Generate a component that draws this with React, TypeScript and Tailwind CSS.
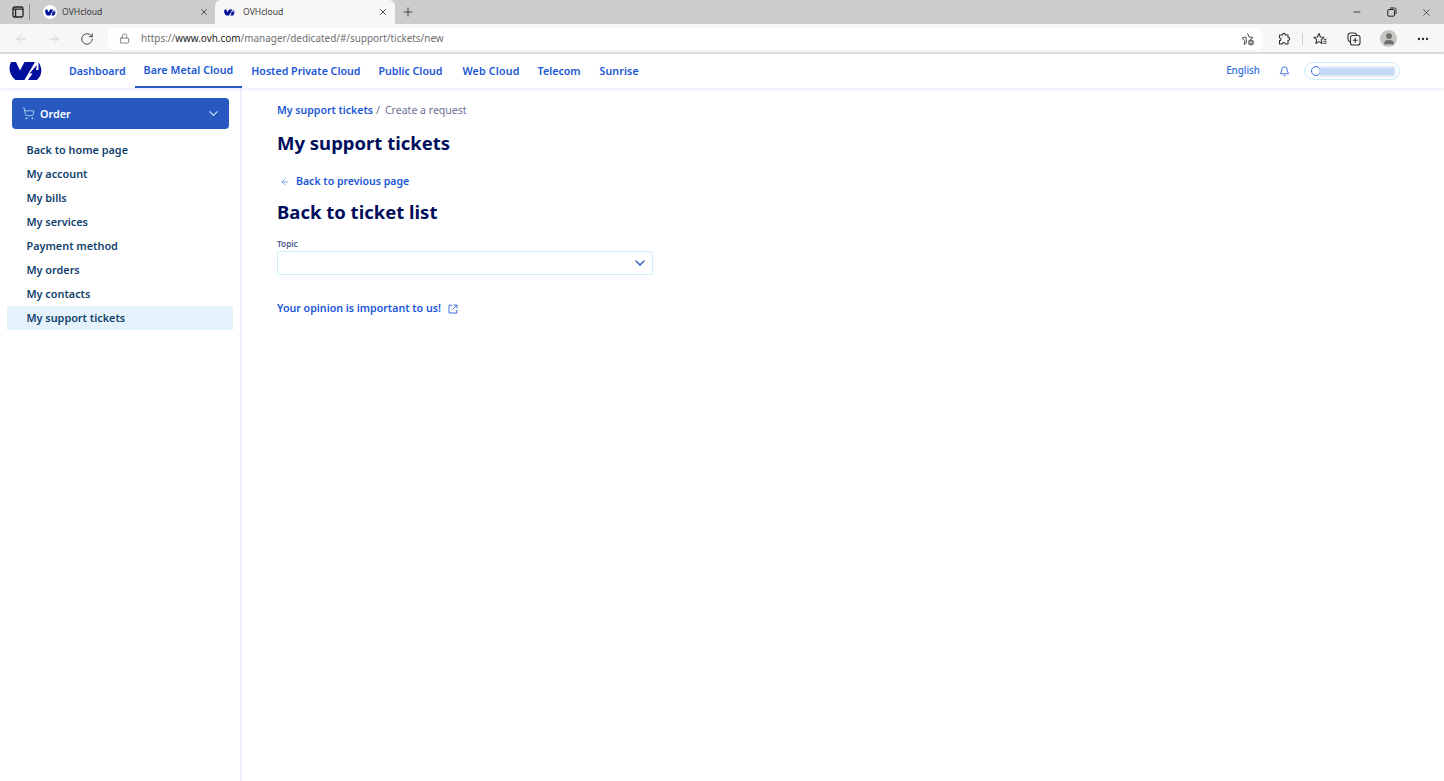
import { ArrowLeft, ArrowRight, Bell, ChevronDown, Ellipsis, Lock, Minus, Plus, RotateCw, ShoppingCart, X, User } from "lucide-react";

function OvhLogo({ className }: { className?: string }) {
  return (
    <svg viewBox="0 0 34 20" className={className} fill="#000e9c">
      <path d="M2 1 L7 1 L11 9.5 L15.5 1 L26 1 L15.5 19 L6.5 19 C0.5 14 -1 7 2 1 Z" />
      <path d="M29.5 1 C33.5 7 33.5 14 28 19 L19 19 L23.5 12.5 L20.5 12.5 L28 4 L27 9 L29.5 9 Z" />
    </svg>
  );
}

function Tab({ active, color }: { active?: boolean; color: string }) {
  return (
    <div className={`flex h-[24px] items-center ${active ? "w-[180px] rounded-t-md bg-[#f7f7f7] pl-[7px] pr-[7px]" : "w-[172px] pl-[0px] pr-[6px]"}`}>
      <span className={`flex h-[14px] w-[14px] items-center justify-center rounded-full ${color}`}>
        <OvhLogo className="h-[7px] w-[11px]" />
      </span>
      <span className={`flex-1 text-[8.6px] text-[#3a3a3a] ${active ? "ml-[7px]" : "ml-[5px]"}`}>OVHcloud</span>
      <X className="h-[10px] w-[10px] text-[#333]" strokeWidth={2} />
    </div>
  );
}

function AddFavoriteIcon() {
  return (
    <svg viewBox="0 0 14 14" className="h-[14px] w-[14px]" fill="none" stroke="#555" strokeWidth="1">
      <path d="M6.5 1.5 L8 5 L12 5.3 L9 8 M5.5 11 L3 12.5 L3.9 8.6 L1 6 L5 5 Z" strokeLinejoin="round" />
      <circle cx="10" cy="10.5" r="3" fill="#777" stroke="none" />
      <path d="M8.6 10.5H11.4" stroke="#f2f2f2" />
    </svg>
  );
}

function ExtensionIcon() {
  return (
    <svg viewBox="0 0 14 14" className="h-[14px] w-[14px]" fill="none" stroke="#333" strokeWidth="1.1" strokeLinejoin="round">
      <path d="M5.5 3 C5 0.8 8.6 0.8 8.2 3 L11 3 L11 5.4 C13.2 5 13.2 8.6 11 8.2 L11 12 L8.2 12 C8.6 10 5 10 5.5 12 L2.5 12 L2.5 8.6 C4.5 9 4.5 5.6 2.5 6 L2.5 3 Z" />
    </svg>
  );
}

function FavoritesIcon() {
  return (
    <svg viewBox="0 0 14 14" className="h-[14px] w-[14px]" fill="none" stroke="#333" strokeWidth="1.1" strokeLinejoin="round">
      <path d="M6 1.5 L7.4 5 L10.8 5.3 L8.2 7.6 L9 11.5 L6 9.6 L2.8 11.5 L3.7 7.6 L1 5.3 L4.5 5 Z" />
      <path d="M10.5 7.2H13.5M10.5 9.2H13.5M10.5 11.2H13.5" />
    </svg>
  );
}

function CollectionsIcon() {
  return (
    <svg viewBox="0 0 14 14" className="h-[14px] w-[14px]" fill="none" stroke="#333" strokeWidth="1.1">
      <path d="M3 10 C1.6 9.5 1 8.5 1 7 L1 3.5 C1 2 2 1 3.5 1 L7 1 C8.5 1 9.3 1.6 9.8 3" />
      <rect x="3.5" y="3.5" width="9.5" height="9.5" rx="2" />
      <path d="M8.2 5.8V10.7M5.8 8.2H10.7" />
    </svg>
  );
}

function RestoreIcon() {
  return (
    <svg viewBox="0 0 10 10" className="ml-[25px] h-[10px] w-[10px]" fill="none" stroke="#222" strokeWidth="1">
      <rect x="0.8" y="2.5" width="6.7" height="6.7" rx="1.2" />
      <path d="M3 1 H7.5 C8.4 1 9 1.6 9 2.5 V7" />
    </svg>
  );
}

function NewWindowIcon() {
  return (
    <svg viewBox="0 0 10 10" className="ml-[7px] h-[10px] w-[10px]" fill="none" stroke="#3f6fd8" strokeWidth="1">
      <path d="M4 1.2 H1 V9 H8.8 V6" />
      <path d="M5.6 1 H9 V4.4 M9 1 L4.6 5.4" />
    </svg>
  );
}

const nav = [
  { label: "Dashboard", cls: "px-[9px]" },
  { label: "Bare Metal Cloud", cls: "px-[9px] tracking-[0.05px] border-b-[2px] border-[#2859c0]" },
  { label: "Hosted Private Cloud", cls: "px-[9px]" },
  { label: "Public Cloud", cls: "pl-[9px] pr-[10px]" },
  { label: "Web Cloud", cls: "pl-[10px] pr-[9px] tracking-[0.2px]" },
  { label: "Telecom", cls: "px-[9px]" },
  { label: "Sunrise", cls: "pl-[10px] pr-[9px] tracking-[0.1px]" },
];
const side = ["Back to home page", "My account", "My bills", "My services", "Payment method", "My orders", "My contacts", "My support tickets"];

export default function App() {
  return (
    <div className="flex h-[781px] w-[1444px] flex-col overflow-hidden bg-white font-['Noto_Sans',sans-serif]">
      <div className="flex h-[24px] shrink-0 items-center bg-[#cccccc]">
        <div className="flex w-[36px] items-center pl-[12px]">
          <svg viewBox="0 0 12 12" className="h-[12px] w-[12px]" fill="none" stroke="#222" strokeWidth="1.3">
            <rect x="1" y="1" width="10" height="10" rx="1.5" />
            <path d="M1 3.2H11M3.6 3.2V11" />
          </svg>
          <span className="ml-[5px] h-[16px] w-px bg-[#8a8a8a]" />
        </div>
        <div className="ml-[7px]"><Tab color="bg-white" /></div>
        <Tab active color="bg-[#f7f7f7]" />
        <Plus className="ml-[6px] h-[14px] w-[14px] text-[#333]" strokeWidth={1.5} />
        <div className="ml-auto flex items-center">
          <Minus className="h-[10px] w-[10px] text-[#222]" />
          <RestoreIcon />
          <X className="ml-[24px] mr-[12px] h-[11px] w-[11px] text-[#222]" strokeWidth={1.5} />
        </div>
      </div>
      <div className="flex h-[30px] shrink-0 items-center border-b-[2px] border-[#dedede] bg-[#f7f7f7] pt-[1px]">
        <ArrowLeft className="ml-[14px] h-[14px] w-[14px] text-[#d0d0d0]" strokeWidth={1.5} />
        <ArrowRight className="ml-[19px] h-[14px] w-[14px] text-[#d0d0d0]" strokeWidth={1.5} />
        <RotateCw className="ml-[19px] h-[14px] w-[14px] text-[#333]" strokeWidth={1.5} />
        <div className="ml-[14px] flex h-[22px] w-[1155px] items-center rounded-md bg-white pl-[11px]">
          <Lock className="h-[11px] w-[11px] text-[#555]" strokeWidth={1.5} />
          <span className="ml-[11px] text-[9.93px] text-[#6f6f6f]">
            https://<span className="text-[#222]">www.ovh.com</span>/manager/dedicated/#/support/tickets/new
          </span>
          <span className="ml-auto mr-[8px]"><AddFavoriteIcon /></span>
        </div>
        <span className="ml-[14px]"><ExtensionIcon /></span>
        <span className="ml-[11px] h-[12px] w-px bg-[#cfcfcf]" />
        <span className="ml-[10px]"><FavoritesIcon /></span>
        <span className="ml-[20px]"><CollectionsIcon /></span>
        <span className="ml-[19px] flex h-[17px] w-[17px] items-center justify-center overflow-hidden rounded-full bg-[#c9c6c2]">
          <User className="h-[14px] w-[14px] text-[#6d6d6d]" fill="#6d6d6d" />
        </span>
        <Ellipsis className="ml-[19px] h-[14px] w-[14px] text-[#222]" />
      </div>
      <header className="z-10 flex h-[34px] shrink-0 items-center bg-white shadow-[0_1px_3px_rgba(190,200,240,0.45)]">
        <OvhLogo className="ml-[9px] h-[20px] w-[34px]" />
        <nav className="ml-[17px] flex h-full items-center">
          {nav.map((n) => (
            <span
              key={n.label}
              className={`flex h-full items-center pt-[1px] text-[10.65px] font-semibold text-[#1a56d6] ${n.cls}`}
            >
              {n.label}
            </span>
          ))}
        </nav>
        <span className="ml-auto pt-[1px] text-[9.8px] font-medium text-[#2f6fe0]">English</span>
        <Bell className="ml-[19px] h-[11px] w-[11px] text-[#1a56d6]" strokeWidth={1.8} />
        <div className="ml-[14px] mr-[44px] flex h-[18px] w-[96px] items-center rounded-full border border-[#c9ecfb] pl-[6px]">
          <span className="h-[10px] w-[10px] rounded-full border border-[#3b6fe0]" />
          <span className="-ml-[2px] h-[9px] w-[76px] bg-[#c6d8f5] blur-[1px]" />
        </div>
      </header>
      <div className="flex min-h-0 flex-1">
        <aside className="w-[242px] shrink-0 border-r-[2px] border-[#f0f0fb] pl-[7px] pr-[7px] pt-[10px]">
          <div className="ml-[5px] flex h-[31px] w-[217px] items-center rounded-[4px] bg-[#2859c0] pl-[10px] pr-[8px] text-white">
            <ShoppingCart className="h-[13px] w-[13px] text-[#b8e1f5]" strokeWidth={1.5} />
            <span className="ml-[5px] flex-1 pt-[1px] text-[10.8px] font-semibold">Order</span>
            <ChevronDown className="h-[15px] w-[15px] text-[#cfe6f7]" strokeWidth={1.8} />
          </div>
          <ul className="mt-[9px]">
            {side.map((s) => (
              <li
                key={s}
                className={`flex h-[24px] items-center pl-[19.5px] pt-[1px] text-[10.85px] font-semibold text-[#113f6d] ${s === "My support tickets" ? "bg-[#e4f3fb]" : ""}`}
              >
                {s}
              </li>
            ))}
          </ul>
        </aside>
        <main className="flex-1 pl-[35px] pt-[14px]">
          <div className="flex h-[16px] items-center pt-[1px] text-[10.55px]">
            <span className="font-semibold text-[#1a56d6]">My support tickets</span>
            <span className="ml-[3px] text-[#6c7096]">/</span>
            <span className="ml-[5px] text-[#6c7096]">Create a request</span>
          </div>
          <h1 className="mt-[12px] h-[26px] text-[18.5px] leading-[26px] font-bold text-[#000e5c]">My support tickets</h1>
          <div className="mt-[19px] flex h-[14px] items-center pl-[3px]">
            <ArrowLeft className="h-[10px] w-[10px] text-[#2f6fe0]" strokeWidth={1.5} />
            <span className="ml-[6px] text-[10.55px] font-semibold text-[#1a56d6]">Back to previous page</span>
          </div>
          <h2 className="mt-[10px] h-[26px] text-[18.5px] leading-[26px] font-bold text-[#000e5c]">Back to ticket list</h2>
          <div className="mt-[13px] h-[12px] text-[8.2px] leading-[12px] font-semibold text-[#4d5693]">Topic</div>
          <div className="mt-[1px] flex h-[24px] w-[376px] items-center justify-end rounded-[2px] border border-[#c9f0fb] pr-[4px]">
            <ChevronDown className="h-[16px] w-[16px] text-[#2859c0]" strokeWidth={2} />
          </div>
          <div className="mt-[26px] flex h-[16px] items-center">
            <span className="text-[10.65px] font-semibold text-[#1a56d6]">Your opinion is important to us!</span>
            <NewWindowIcon />
          </div>
        </main>
      </div>
    </div>
  );
}
